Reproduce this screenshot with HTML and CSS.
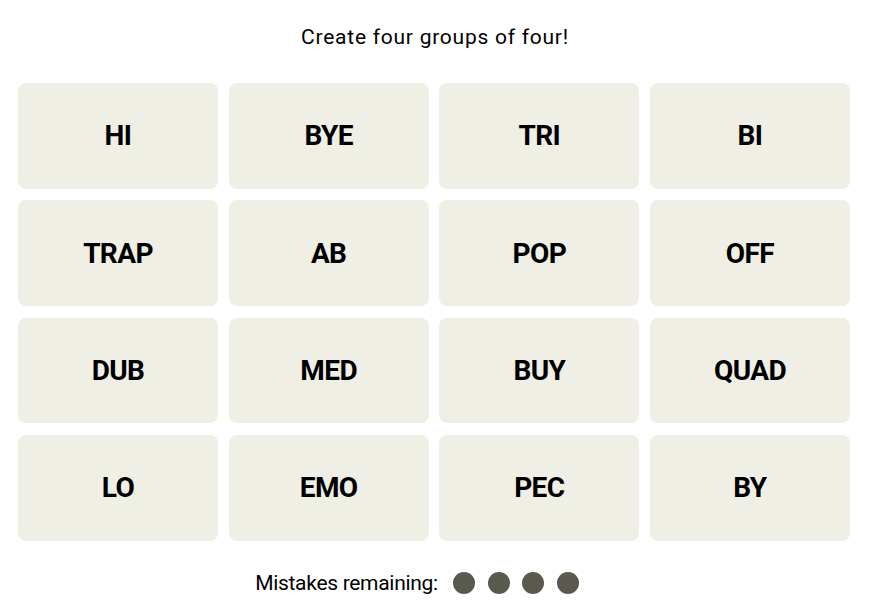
FILE: index.html
```html
<!DOCTYPE html>
<html>
<head>
<meta charset="utf-8">
<link rel="stylesheet" href="styles.css">
</head>
<body>
<main class="game">
  <h2 class="title">Create four groups of four!</h2>
  <div class="board">
    <div class="tile">HI</div>
    <div class="tile">BYE</div>
    <div class="tile">TRI</div>
    <div class="tile">BI</div>
    <div class="tile">TRAP</div>
    <div class="tile">AB</div>
    <div class="tile">POP</div>
    <div class="tile">OFF</div>
    <div class="tile">DUB</div>
    <div class="tile">MED</div>
    <div class="tile">BUY</div>
    <div class="tile">QUAD</div>
    <div class="tile">LO</div>
    <div class="tile">EMO</div>
    <div class="tile">PEC</div>
    <div class="tile">BY</div>
  </div>
  <div class="mistakes">
    <span class="mistakes-label">Mistakes remaining:</span>
    <span class="dots">
      <span class="dot"></span>
      <span class="dot"></span>
      <span class="dot"></span>
      <span class="dot"></span>
    </span>
  </div>
</main>
</body>
</html>
```

FILE: styles.css
```css
html, body {
  margin: 0;
  padding: 0;
  background: #ffffff;
}

body {
  font-family: Roboto, "Liberation Sans", sans-serif;
  color: #000;
}

.game {
  width: 870px;
  display: flex;
  flex-direction: column;
  align-items: center;
}

.title {
  margin: 25px 0 0;
  font-size: 21px;
  line-height: 24px;
  font-weight: 400;
  letter-spacing: 0.75px;
  text-align: center;
}

.board {
  margin: 34px 0 0 -2px;
  width: 832px;
  display: grid;
  grid-template-columns: repeat(4, 200px);
  grid-auto-rows: 105.67px;
  column-gap: 10.67px;
  row-gap: 11.67px;
}

.tile {
  background: #efefe6;
  border-radius: 8px;
  display: flex;
  align-items: center;
  justify-content: center;
  font-size: 28px;
  font-weight: 700;
  letter-spacing: -0.6px;
}

.mistakes {
  margin-top: 31px;
  display: flex;
  align-items: center;
  padding-right: 36px;
  height: 22px;
}

.mistakes-label {
  font-size: 21px;
  line-height: 22px;
  letter-spacing: -0.3px;
}

.dots {
  display: flex;
  gap: 12.67px;
  margin-left: 15px;
}

.dot {
  width: 22px;
  height: 22px;
  border-radius: 50%;
  background: #5a594e;
}
```
